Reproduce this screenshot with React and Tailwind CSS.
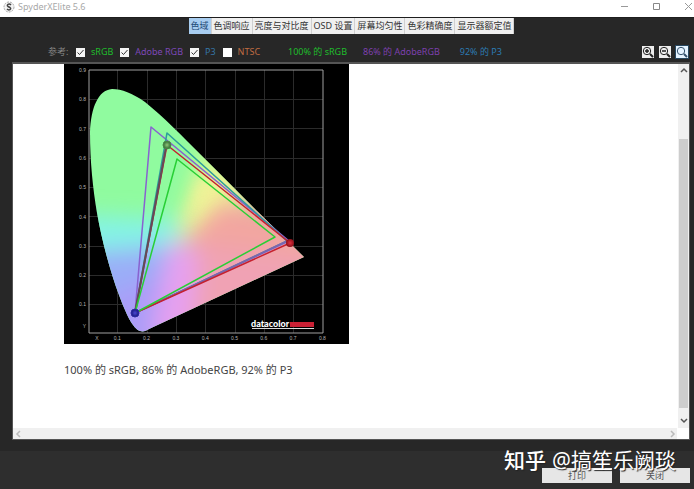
import React from "react";

const tabs = ["色域", "色调响应", "亮度与对比度", "OSD 设置", "屏幕均匀性", "色彩精确度", "显示器额定值"];

const references = [
  { id: "srgb", label: "sRGB", color: "text-[#1fbe2c]", checked: true },
  { id: "adobe", label: "Adobe RGB", color: "text-[#7e48b8]", checked: true },
  { id: "p3", label: "P3", color: "text-[#3576a8]", checked: true },
  { id: "ntsc", label: "NTSC", color: "text-[#c06c42]", checked: false },
];

const columns = [53, 83, 112, 141, 171, 200, 229];
const rows = [35, 64, 94, 123, 152, 182, 211, 240];
const yLabels = ["0.9", "0.8", "0.7", "0.6", "0.5", "0.4", "0.3", "0.2", "0.1"];
const xLabels = ["X", "0.1", "0.2", "0.3", "0.4", "0.5", "0.6", "0.7", "0.8"];

function GamutChart() {
  return (
    <svg viewBox="0 0 285 280" className="block w-[285px] shrink-0" role="img" aria-label="色域">
      <defs>
        <clipPath id="locus">
          <path d="M48 25C34 26 27 44 26 68C26 98 29 125 33 149C38 177 46 207 55 231C62 250 69 265 76 267C79 268 82 267 85 265L240 193L193 147L136 90C119 73 101 54 81 38C68 29 58 25 48 25Z" />
        </clipPath>
        <filter id="soft" x="-30%" y="-30%" width="160%" height="160%">
          <feGaussianBlur stdDeviation="11" />
        </filter>
        <filter id="wide" x="-50%" y="-50%" width="200%" height="200%">
          <feGaussianBlur stdDeviation="8" />
        </filter>
        <radialGradient id="greenDot"><stop offset="0" stopColor="#8fc27a" /><stop offset="1" stopColor="#2c6a2f" /></radialGradient>
        <radialGradient id="blueDot"><stop offset="0" stopColor="#4a4ad0" /><stop offset="1" stopColor="#15157c" /></radialGradient>
        <radialGradient id="redDot"><stop offset="0" stopColor="#e03040" /><stop offset="1" stopColor="#8c0f18" /></radialGradient>
      </defs>
      <rect width="285" height="280" fill="#000" />
      <g stroke="#2b2b2b" strokeWidth="1">
        {columns.map((x) => <path key={x} d={`M${x}.5 6V269`} />)}
        {rows.map((y) => <path key={y} d={`M25 ${y}.5H259`} />)}
      </g>
      <g clipPath="url(#locus)">
        <rect width="285" height="280" fill="#90fb9f" />
        <g filter="url(#soft)">
          <path d="M-20 150L118 155L118 185L-20 200Z" fill="#84f3e6" />
          <path d="M-20 192L118 180L122 300L-20 300Z" fill="#9aaef8" />
          <path d="M40 232L112 205L120 300L40 300Z" fill="#aa9df8" />
          <path d="M112 174L140 78L185 112Z" fill="#d2fb94" />
          <path d="M114 174L150 105L192 132Z" fill="#f2ee96" />
          <path d="M122 172L156 138L205 140L290 200L140 260Z" fill="#f2a6a0" />
          <path d="M120 178L290 200L130 290L96 270Z" fill="#f0a2b4" />
          <path d="M106 174L134 190L126 290L88 275Z" fill="#e6a0f0" />
        </g>
        <path d="M120 162L136 112L158 122Z" fill="#f4f298" opacity="0.9" filter="url(#wide)" />
      </g>
      <path d="M25 6H259V269H25Z" fill="none" stroke="#a0a0a0" />
      <g fill="none" strokeWidth="1.5" strokeLinejoin="round">
        <path d="M87 63L225 177L71 249Z" stroke="#8862d0" />
        <path d="M103 69L223 177L71 249Z" stroke="#2d9d9c" />
        <path d="M71 249L223 177" stroke="#8062ae" />
        <path d="M103 81L226 179L71 249Z" stroke="#c5202e" strokeWidth="1.5" />
        <path d="M102 83L71 249" stroke="#644a58" strokeWidth="2" />
        <path d="M113 95L211 173L71 249Z" stroke="#28cf35" />
      </g>
      <circle cx="103" cy="81" r="4" fill="url(#greenDot)" stroke="#4b8549" />
      <circle cx="71" cy="249" r="4" fill="url(#blueDot)" stroke="#2c2ca0" />
      <circle cx="226" cy="179" r="4" fill="url(#redDot)" />
      <g fill="#b4b4b4" fontFamily="Liberation Sans, sans-serif" fontSize="5">
        {yLabels.map((label, i) => <text key={label} x="22" y={8 + i * 29.3} textAnchor="end">{label}</text>)}
        <text x="22" y="264" textAnchor="end">Y</text>
        {xLabels.map((label, i) => <text key={label} x={i === 0 ? 33 : 24 + i * 29.3} y="276" textAnchor="middle">{label}</text>)}
      </g>
      <text x="187" y="263" fill="#fff" fontFamily="Lato, sans-serif" fontWeight="900" fontSize="9">datacolor</text>
      <path d="M188 264.500H250" stroke="#ddd" />
      <path d="M226 258H250V263H226Z" fill="#c92034" />
    </svg>
  );
}

function Magnifier({ sign, label, active }) {
  return (
    <button aria-label={label} className={`h-3 w-3 ${active ? "bg-[#e5f3ff] outline outline-[#28475f]" : "bg-[#eeeeee]"}`}>
      <svg viewBox="0 0 12 12" className="h-3 w-3" fill="none" stroke={active ? "#34516c" : "#222"}>
        <circle cx="5" cy="5" r="3.7" />
        <path d="M8 8L11 11" strokeWidth="2" />
        {sign && <path d={sign} strokeWidth="1.5" />}
      </svg>
    </button>
  );
}

function Chevron({ d, color }) {
  return (
    <svg viewBox="0 0 10 10" className="h-[10px] w-[10px]" fill="none" stroke={color} strokeWidth="1.5">
      <path d={d} />
    </svg>
  );
}

export default function App() {
  return (
    <div className="relative flex min-h-screen flex-col bg-[#2e2e2e] font-['Noto_Sans','Noto_Sans_CJK_SC',sans-serif] text-[9px] leading-3">
      <header className="flex h-[17px] items-start justify-between bg-white pl-[3px]">
        <div className="flex items-center gap-[3px] pt-px">
          <svg viewBox="0 0 12 12" className="h-3 w-3">
            <circle cx="6" cy="6" r="5" fill="#f4f4f4" stroke="#aaa" strokeDasharray="2 1" />
            <path d="M8 4C6 2 3 4 5 5.5L7 6.5C9 8 6 10 4 8" fill="none" stroke="#444" strokeWidth="1.5" />
          </svg>
          <h1 className="text-[#a8a8a8]">SpyderXElite 5.6</h1>
        </div>
        <div className="flex gap-[22px] pt-[2px]">
          <button aria-label="最小化">
            <svg viewBox="0 0 10 10" className="h-[10px] w-[10px]" stroke="#999"><path d="M1 4.500H8" /></svg>
          </button>
          <button aria-label="最大化">
            <svg viewBox="0 0 10 10" className="h-[10px] w-[10px]" fill="none" stroke="#888"><path d="M1.500 1.500H7.500V7.500H1.500Z" /></svg>
          </button>
          <button aria-label="关闭窗口">
            <svg viewBox="0 0 10 10" className="h-[10px] w-[10px]" stroke="#999"><path d="M1 1L8 8M8 1L1 8" /></svg>
          </button>
        </div>
      </header>

      <div className="flex grow flex-col border-t border-[#1e1e1e] bg-[#272727]">
        <nav className="flex justify-center pl-[9px]">
          {tabs.map((tab, i) => (
            <button key={tab} className={`h-4 border-r border-[#d0d0d0] px-[2px] whitespace-nowrap ${i === 0 ? "bg-[#a8cdf0] text-[#1e4a78]" : "bg-[#f0f0f0] text-[#333]"}`}>
              {tab}
            </button>
          ))}
        </nav>

        <div className="flex h-7 items-center pt-2 pr-[6px] pl-12">
          <span className="w-7 text-[#858585]">参考:</span>
          <div className="flex gap-[7px]">
            {references.map((item) => (
              <label key={item.id} htmlFor={item.id} className={`flex items-center gap-[6px] ${item.color}`}>
                <input id={item.id} type="checkbox" defaultChecked={item.checked} className="peer h-[9px] w-[9px] appearance-none bg-white checked:bg-[#f4f4f4]" />
                <svg viewBox="0 0 9 9" className="pointer-events-none invisible -ml-[15px] h-[9px] w-[9px] peer-checked:visible" fill="none" stroke="#333">
                  <path d="M1.500 4.500L3.500 6.500L7.500 2" />
                </svg>
                {item.label}
              </label>
            ))}
          </div>
          <div className="ml-7 flex gap-4">
            <span className="text-[#1fbe2c]">100% 的 sRGB</span>
            <span className="text-[#7e40ae]">86% 的 AdobeRGB</span>
            <span className="ml-1 text-[#2c7bb2]">92% 的 P3</span>
          </div>
          <div className="ml-auto flex gap-[5px]">
            <Magnifier label="放大" sign="M3 5H7M5 3V7" />
            <Magnifier label="缩小" sign="M3 5H7" />
            <Magnifier label="适合窗口" active />
          </div>
        </div>

        <main className="mr-1 ml-3 flex grow flex-col border border-t-2 border-[#555] bg-white">
          <div className="flex grow">
            <section className="grow pl-[51px]">
              <GamutChart />
              <p className="pt-[18px] text-[11px] leading-4 text-[#444]">100% 的 sRGB, 86% 的 AdobeRGB, 92% 的 P3</p>
            </section>
            <div className="flex w-[11px] flex-col items-center bg-[#f0f0f0]">
              <button aria-label="向上滚动" className="h-[75px] pt-[2px]"><span className="flex h-full items-start"><Chevron d="M2 6L5 3L8 6" color="#555" /></span></button>
              <div className="mb-1 w-[9px] grow bg-[#cdcdcd]" />
              <button aria-label="向下滚动" className="py-[3px]"><Chevron d="M2 4L5 7L8 4" color="#555" /></button>
            </div>
          </div>
          <div className="flex h-[11px] items-center justify-between bg-[#f0f0f0]">
            <button aria-label="向左滚动" className="pl-px"><Chevron d="M6 2L3 5L6 8" color="#bbb" /></button>
            <button aria-label="向右滚动" className="ml-auto"><Chevron d="M4 2L7 5L4 8" color="#bbb" /></button>
            <div className="h-[11px] w-3 bg-white" />
          </div>
        </main>
        <div className="h-[11px]" />
      </div>

      <footer className="flex h-[38px] items-end justify-end gap-2 pr-1 pb-[6px]">
        <button className="h-[15px] w-[70px] bg-[#e6e6e6] text-[#555]">打印</button>
        <button className="h-[15px] w-[70px] bg-[#e6e6e6] text-[#555]">关闭</button>
      </footer>

      <div className="pointer-events-none absolute right-[18px] bottom-[17px] flex gap-[6px] text-[21px] leading-6 whitespace-nowrap text-white [text-shadow:1px_1px_1px_#222]">
        <span className="font-medium">知乎</span>
        <span>@搞笙乐阙琰</span>
      </div>
    </div>
  );
}
